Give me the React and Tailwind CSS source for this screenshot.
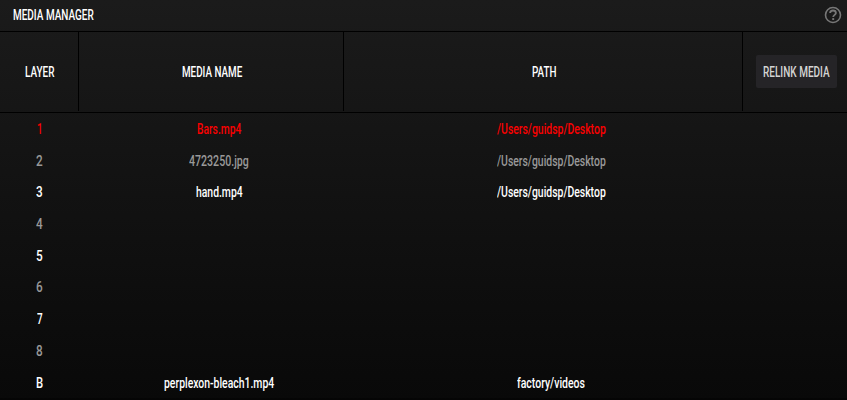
import { useLayoutEffect, useRef, useState } from "react";

// Condenses a label to a fixed width, keeping its height.
function Condensed({ width, children }) {
  const ref = useRef(null);
  const [scale, setScale] = useState(1);
  useLayoutEffect(() => {
    setScale(width / ref.current.offsetWidth);
  }, [width, children]);
  return (
    <span className="block shrink-0 overflow-visible whitespace-nowrap" style={{ width }}>
      <span ref={ref} className="inline-block origin-left" style={{ transform: `scaleX(${scale})` }}>
        {children}
      </span>
    </span>
  );
}

const rows = [
  { layer: "1", w: 5.5, color: "text-[#fa0000]", name: "Bars.mp4", nameW: 44.5, path: "/Users/guidsp/Desktop", pathW: 108.5 },
  { layer: "2", w: 6.5, color: "text-[#999999]", name: "4723250.jpg", nameW: 60, path: "/Users/guidsp/Desktop", pathW: 108.5 },
  { layer: "3", w: 6.5, color: "text-white", name: "hand.mp4", nameW: 46.5, path: "/Users/guidsp/Desktop", pathW: 108.5 },
  { layer: "4", w: 6.5, color: "text-[#999999]" },
  { layer: "5", w: 6.5, color: "text-white" },
  { layer: "6", w: 6.5, color: "text-[#999999]" },
  { layer: "7", w: 5.5, color: "text-white" },
  { layer: "8", w: 6.5, color: "text-[#999999]" },
  { layer: "B", w: 7, color: "text-white", name: "perplexon-bleach1.mp4", nameW: 110, path: "factory/videos", pathW: 68 },
];

export default function App() {
  return (
    <div className="flex h-[400px] w-[847px] flex-col overflow-hidden bg-linear-to-b from-[#1b1b1b] to-[#090909] font-['Roboto',sans-serif] text-[14.5px] leading-5 font-medium text-white">
      <header className="flex h-8 shrink-0 items-center justify-between border-b border-black pr-[5px] pl-[13px]">
        <Condensed width={80.5}>MEDIA MANAGER</Condensed>
        <svg className="mb-px size-[18px]" viewBox="0 0 18 18" fill="none" stroke="#777777" strokeWidth="1.6">
          <circle cx="9" cy="9" r="7.5" />
          <path d="M6.1 7.1C6.1 5.4 7.3 4.5 9 4.5s2.9 1 2.9 2.5c0 1.8-2.7 2-2.7 4.1" strokeWidth="1.8" />
          <path d="M9.2 12.1v1.9" strokeWidth="1.9" />
        </svg>
      </header>
      <div className="flex h-[81px] shrink-0 border-b border-black pb-px">
        <div className="flex w-[79px] items-center justify-center border-r border-black pt-0.5 pl-px"><Condensed width={29.5}>LAYER</Condensed></div>
        <div className="flex w-[265px] items-center justify-center border-r border-black pt-0.5 pl-0.5"><Condensed width={60.5}>MEDIA NAME</Condensed></div>
        <div className="flex w-[399px] items-center justify-center border-r border-black pt-0.5 pl-0.5"><Condensed width={24.5}>PATH</Condensed></div>
        <div className="flex flex-1 items-center pl-[13px]">
          <button className="flex h-[33px] w-[81px] items-center justify-center rounded-xs bg-[#252427] pt-0.5 font-medium text-[#d4d4d4]">
            <Condensed width={67}>RELINK MEDIA</Condensed>
          </button>
        </div>
      </div>
      <main className="flex flex-col">
        {rows.map((r) => (
          <div key={r.layer} className={`flex h-[31.7px] items-center pt-[2.4px] ${r.color}`}>
            <div className="flex w-[79px] justify-center"><Condensed width={r.w}>{r.layer}</Condensed></div>
            <div className="flex w-[280px] justify-center">{r.name && <Condensed width={r.nameW}>{r.name}</Condensed>}</div>
            <div className="flex w-[384px] justify-center">{r.path && <Condensed width={r.pathW}>{r.path}</Condensed>}</div>
          </div>
        ))}
      </main>
      <div className="flex-1 bg-black/40" />
    </div>
  );
}
